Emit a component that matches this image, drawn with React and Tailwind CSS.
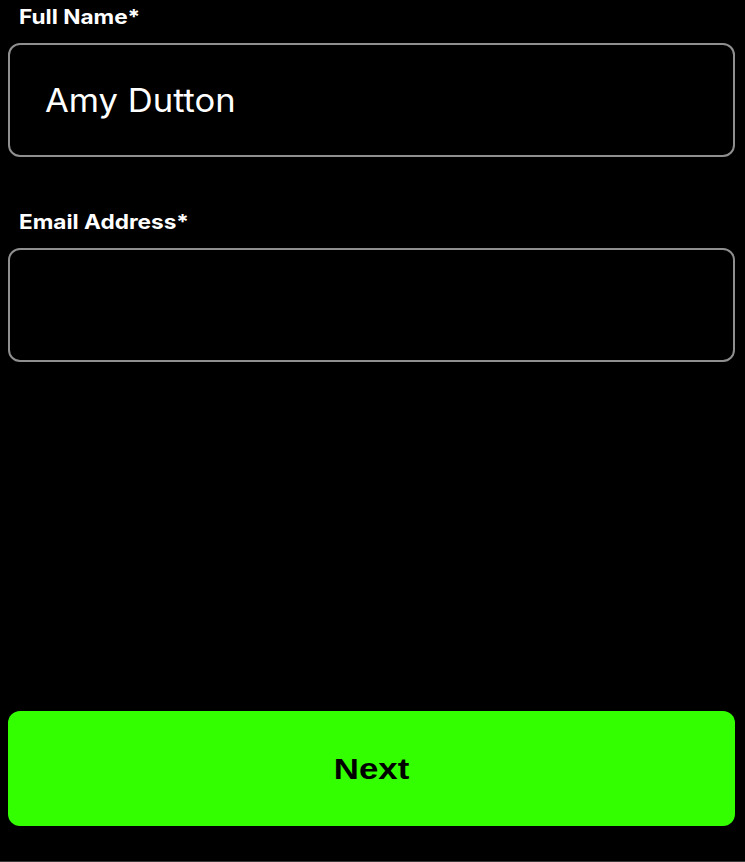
export default function App() {
  return (
    <div className="w-[745px] h-[862px] bg-black flex flex-col pl-2 pr-[10px] border-b border-[#3a3a3a]" style={{ fontFamily: "Inter, 'Noto Sans', sans-serif" }}>
      <div className="pl-[11px] pt-[5px] h-[29px]">
        <span className="inline-block origin-left scale-x-[1.13] text-[20px] leading-[24px] font-bold text-white">Full Name*</span>
      </div>
      <div className="mt-[14px] h-[114px] rounded-[12px] border-2 border-[#8f8f8f] flex items-center pl-[35px]">
        <span className="inline-block origin-left scale-x-[1.08] text-[32px] leading-[40px] pt-[2px] text-white">Amy Dutton</span>
      </div>
      <div className="pl-[11px] mt-[53px] h-[24px]">
        <span className="inline-block origin-left scale-x-[1.13] text-[20px] leading-[24px] font-bold text-white">Email Address*</span>
      </div>
      <div className="mt-[14px] h-[114px] rounded-[12px] border-2 border-[#8f8f8f]"></div>
      <button className="mt-auto mb-[35px] h-[115px] rounded-[12px] bg-[#33ff00] flex items-center justify-center">
        <span className="inline-block scale-x-[1.16] text-[30px] font-bold text-black" style={{ fontFamily: "'Liberation Sans', Arial, sans-serif" }}>Next</span>
      </button>
    </div>
  );
}
